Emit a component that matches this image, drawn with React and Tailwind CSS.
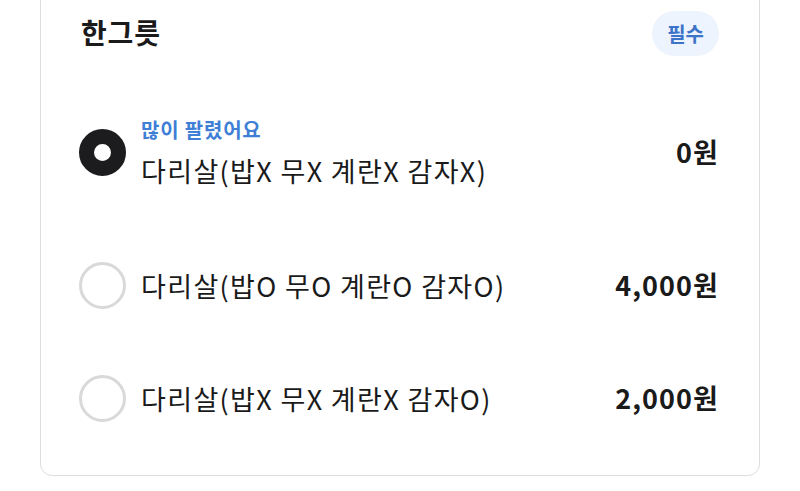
const font = { fontFamily: '"Noto Sans CJK KR", "Noto Sans", sans-serif' };

const options = [
  { label: "다리살(밥X 무X 계란X 감자X)", price: "0원", tag: "많이 팔렸어요", selected: true },
  { label: "다리살(밥O 무O 계란O 감자O)", price: "4,000원" },
  { label: "다리살(밥X 무X 계란X 감자O)", price: "2,000원" },
];

function Radio({ checked }) {
  return checked ? (
    <div className="w-[47px] h-[47px] rounded-full border-[15px] border-[#1c1c1e] bg-white shrink-0" />
  ) : (
    <div className="w-[47px] h-[47px] rounded-full border-[3px] border-[#d9d9d9] bg-white shrink-0" />
  );
}

export default function App() {
  return (
    <div className="w-[800px] h-[491px] bg-white overflow-hidden px-10" style={font}>
      <div className="-mt-5 border border-[#dedede] rounded-xl pt-[30px] pb-5 pl-[38px] pr-10 text-[#1a1a1a]">
        {/* Header */}
        <div className="flex items-center justify-between h-[45px] mb-5">
          <h2 className="text-[28px] font-bold leading-none tracking-[0.03em] -mt-1 ml-[2px]">한그릇</h2>
          <span className="h-[45px] px-[15px] rounded-full bg-[#edf4fd] text-[#3d74c9] text-[20px] font-bold flex items-center">
            필수
          </span>
        </div>

        {/* Options */}
        {options.map((o, i) => (
          <div
            key={i}
            className={`flex items-center justify-between ${i === 0 ? "h-[153px]" : "h-[113px]"}`}
          >
            <div className="flex items-center gap-[15px]">
              <Radio checked={o.selected} />
              <div className="flex flex-col">
                {o.tag && (
                  <span className="text-[20px] font-bold text-[#3f7fd6] leading-[24px] mb-[12px] tracking-[0.04em]">
                    {o.tag}
                  </span>
                )}
                <span className="text-[27px] leading-[34px] tracking-[0.05em]">{o.label}</span>
              </div>
            </div>
            <span className="text-[27px] font-bold tracking-[0.04em]">{o.price}</span>
          </div>
        ))}
      </div>
    </div>
  );
}
